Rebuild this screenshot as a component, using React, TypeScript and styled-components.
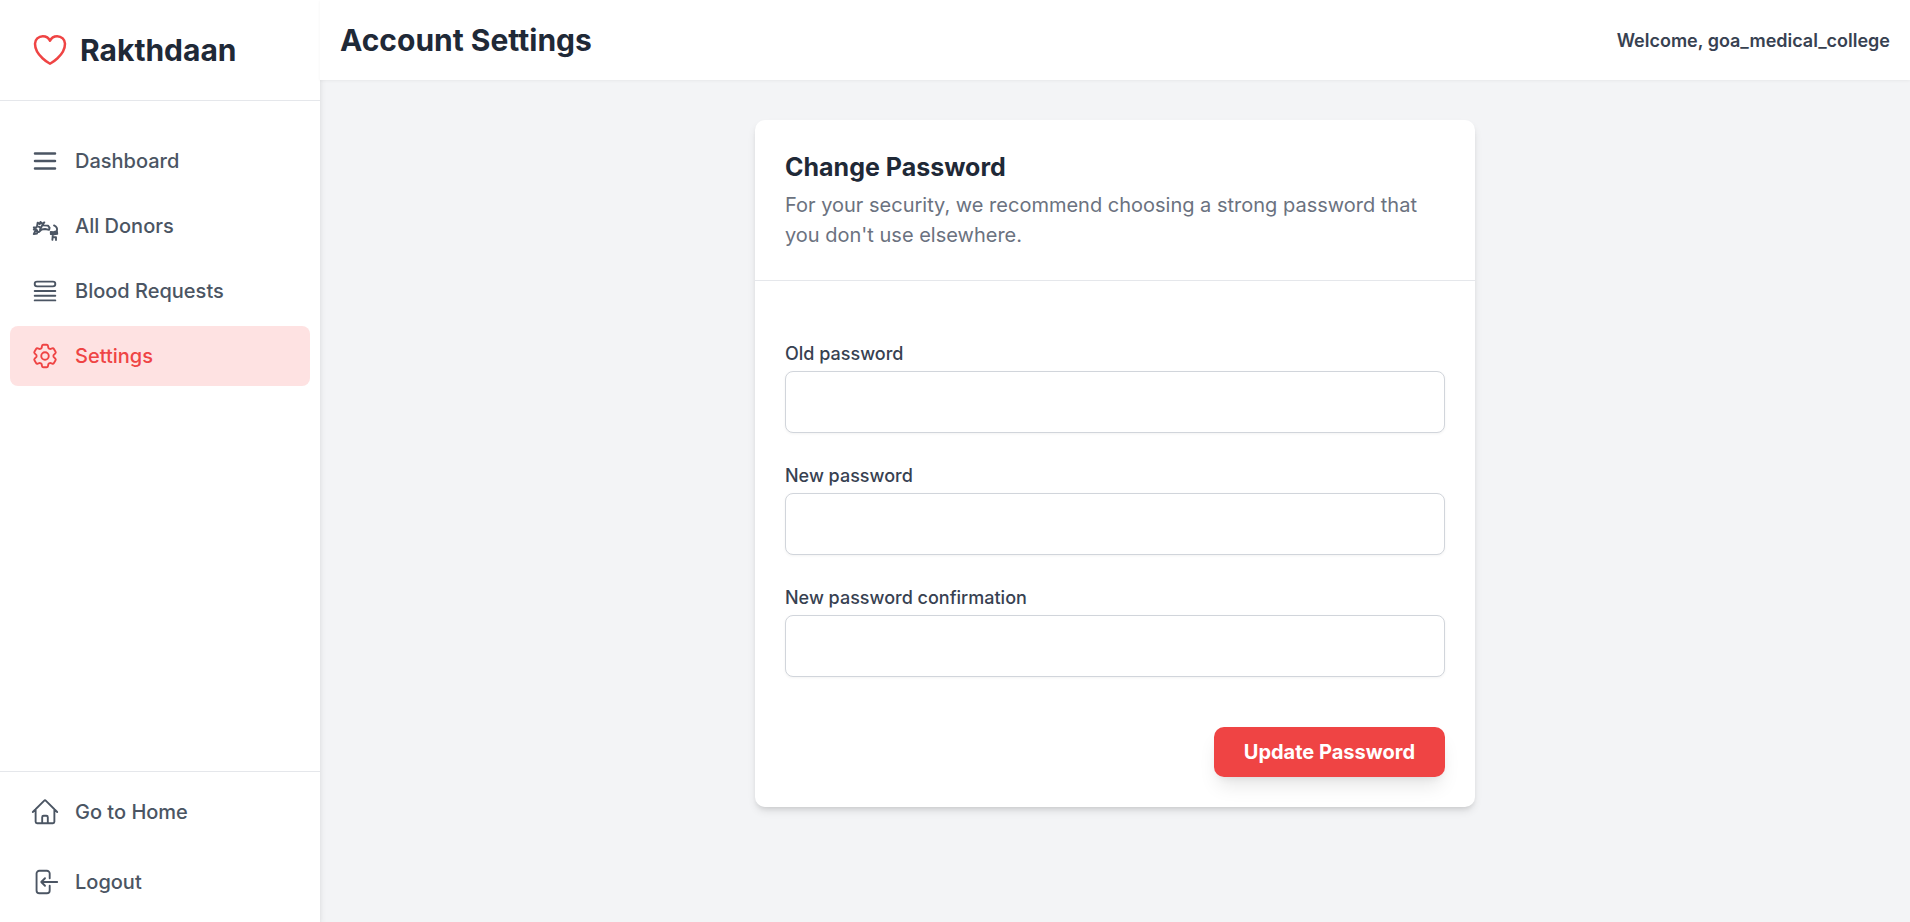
import React, { useState } from 'react';
import styled, { createGlobalStyle, css } from 'styled-components';

const GlobalStyle = createGlobalStyle`
  *, *::before, *::after { box-sizing: border-box; }
  body {
    margin: 0;
    background: #f3f4f6;
    color: #1f2937;
    font-family: Inter, "Liberation Sans", sans-serif;
    font-size: 20px;
    line-height: 30px;
  }
  h1, h2, p { margin: 0; }
`;

const Shell = styled.div`
  display: flex;
  min-height: 100vh;
`;

const Sidebar = styled.aside`
  display: flex;
  flex-direction: column;
  flex: 0 0 320px;
  background: #fff;
  box-shadow: 0 5px 8px -1px rgba(0, 0, 0, 0.1), 0 3px 5px -2px rgba(0, 0, 0, 0.1);
`;

const Brand = styled.div`
  display: flex;
  align-items: center;
  gap: 10px;
  padding: 30px;
  border-bottom: 1px solid #e5e7eb;
  color: #ef4444;
`;

const BrandName = styled.span`
  color: #1f2937;
  font-size: 30px;
  line-height: 40px;
  font-weight: 700;
`;

const Nav = styled.nav`
  display: flex;
  flex-direction: column;
  flex: 1;
  gap: 5px;
  padding: 30px 10px;
`;

const SidebarFooter = styled.div`
  display: flex;
  flex-direction: column;
  gap: 10px;
  padding: 10px;
  border-top: 1px solid #e5e7eb;
`;

const NavLink = styled.a<{ $active?: boolean }>`
  display: flex;
  align-items: center;
  gap: 15px;
  padding: 15px 20px;
  border-radius: 8px;
  color: #4b5563;
  font-weight: 500;
  text-decoration: none;
  ${(p) =>
    p.$active
      ? css`
          background: #fee2e2;
          color: #ef4444;
        `
      : css`
          &:hover {
            background: #f3f4f6;
          }
        `}
`;

const Content = styled.div`
  display: flex;
  flex-direction: column;
  flex: 1;
  min-width: 0;
`;

const TopBar = styled.header`
  position: relative;
  display: flex;
  align-items: center;
  justify-content: space-between;
  padding: 20px;
  background: #fff;
  box-shadow: 0 1px 3px rgba(0, 0, 0, 0.05);
`;

const PageTitle = styled.h1`
  font-size: 30px;
  line-height: 40px;
  font-weight: 700;
`;

const Welcome = styled.span`
  color: #374151;
  font-size: 18px;
  line-height: 25px;
  font-weight: 600;
`;

const Main = styled.main`
  flex: 1;
  padding: 40px;
`;

const Card = styled.section`
  max-width: 720px;
  margin: 0 auto;
  border-radius: 10px;
  background: #fff;
  box-shadow: 0 5px 8px -1px rgba(0, 0, 0, 0.1), 0 3px 5px -2px rgba(0, 0, 0, 0.1);
`;

const CardHeader = styled.div`
  padding: 30px;
  border-bottom: 1px solid #e5e7eb;
`;

const CardTitle = styled.h2`
  margin-bottom: 5px;
  font-size: 25px;
  line-height: 35px;
  font-weight: 700;
`;

const CardText = styled.p`
  color: #6b7280;
`;

const Form = styled.form`
  display: flex;
  flex-direction: column;
  gap: 30px;
  padding: 60px 30px 30px;
`;

const Field = styled.div`
  display: flex;
  flex-direction: column;
  gap: 5px;
`;

const Label = styled.label`
  color: #374151;
  font-size: 18px;
  line-height: 25px;
  font-weight: 500;
`;

const Input = styled.input`
  width: 100%;
  height: 62px;
  padding: 15px 20px;
  border: 1px solid #d1d5db;
  border-radius: 8px;
  background: #fff;
  color: inherit;
  font: inherit;
  box-shadow: 0 1px 3px rgba(0, 0, 0, 0.05);
`;

const Actions = styled.div`
  display: flex;
  justify-content: flex-end;
  padding-top: 20px;
`;

const SubmitButton = styled.button`
  padding: 10px 30px;
  border: 0;
  border-radius: 10px;
  background: #ef4444;
  color: #fff;
  font: inherit;
  font-weight: 700;
  cursor: pointer;
  box-shadow: 0 12px 19px -4px rgba(0, 0, 0, 0.1), 0 5px 8px -5px rgba(0, 0, 0, 0.1);
`;

const Glyph = styled.svg<{ $weight: number }>`
  flex: none;
  overflow: visible;
  fill: none;
  stroke: currentColor;
  stroke-width: ${(p) => p.$weight};
  stroke-linecap: round;
  stroke-linejoin: round;
`;

const icons = {
  heart: [
    'M21 8.25c0-2.485-2.099-4.5-4.688-4.5-1.935 0-3.597 1.126-4.312 2.733-.715-1.607-2.377-2.733-4.313-2.733C5.1 3.75 3 5.765 3 8.25c0 7.22 9 12 9 12s9-4.78 9-12z',
  ],
  bars: ['M4 6h16M4 12h16M4 18h16'],
  donors: [
    'M3 13.2l2.500-.3.600-3.600 1.700 1.200.600-1.800 1.300 1.600 1.800-1.200-1.500 2.400 4.400.200 1.300 1.800-.400 1.600-3.200-.700-2.800.400-2.200 2-1.100-.300-.400 1.500-2.600.500 1-2.200 1.800-.500-.800-1.200-2 .200',
    'M7 12.500l1.500 1 1-1.500-1.500 3M19.200 11.500c2 1 2.800 2.600 2.300 4.200l.300 2.500-2.700.500-2.400-.200-.100-1.800 2.300.200 2.400-.800M17.600 17.300l2.700.300M18.200 19.200l-.300 3.900M20.800 23.200v-2.200h-2.500',
  ],
  queue: [
    'M3.75 12h16.5m-16.5 3.75h16.5M3.75 19.5h16.5M5.625 4.5h12.75a1.875 1.875 0 010 3.75H5.625a1.875 1.875 0 010-3.75z',
  ],
  cog: [
    'M9.594 3.94c.09-.542.56-.94 1.11-.94h2.593c.55 0 1.02.398 1.11.94l.213 1.281c.063.374.313.686.645.87.074.04.147.083.22.127.324.196.72.257 1.075.124l1.217-.456a1.125 1.125 0 011.37.49l1.296 2.247a1.125 1.125 0 01-.26 1.431l-1.003.827c-.293.24-.438.613-.431.992a6.759 6.759 0 010 .255c-.007.378.138.75.43.99l1.005.828c.424.35.534.954.26 1.43l-1.298 2.247a1.125 1.125 0 01-1.369.491l-1.217-.456c-.355-.133-.75-.072-1.076.124a6.57 6.57 0 01-.22.128c-.331.183-.581.495-.644.869l-.213 1.28c-.09.543-.56.941-1.11.941h-2.594c-.55 0-1.02-.398-1.11-.94l-.213-1.281c-.062-.374-.312-.686-.644-.87a6.52 6.52 0 01-.22-.127c-.325-.196-.72-.257-1.076-.124l-1.217.456a1.125 1.125 0 01-1.369-.49l-1.297-2.247a1.125 1.125 0 01.26-1.431l1.004-.827c.292-.24.437-.613.43-.992a6.932 6.932 0 010-.255c.007-.378-.138-.75-.43-.99l-1.004-.828a1.125 1.125 0 01-.26-1.43l1.297-2.247a1.125 1.125 0 011.37-.491l1.216.456c.356.133.751.072 1.076-.124.072-.044.146-.087.22-.128.332-.183.582-.495.644-.869l.214-1.281z',
    'M15 12a3 3 0 11-6 0 3 3 0 016 0z',
  ],
  home: [
    'M2.25 12l8.954-8.955c.44-.439 1.152-.439 1.591 0L21.75 12M4.5 9.75v10.125c0 .621.504 1.125 1.125 1.125H9.75v-4.875c0-.621.504-1.125 1.125-1.125h2.25c.621 0 1.125.504 1.125 1.125V21h4.125c.621 0 1.125-.504 1.125-1.125V9.75M8.25 21h8.25',
  ],
  logout: [
    'M15.75 9V5.25A2.25 2.25 0 0013.5 3h-6a2.25 2.25 0 00-2.25 2.25v13.5A2.25 2.25 0 007.5 21h6a2.25 2.25 0 002.25-2.25V15M12 9l-3 3m0 0l3 3m-3-3h12.75',
  ],
};

type IconName = keyof typeof icons;

const Icon = ({
  name,
  size = 30,
  weight = 1.5,
}: {
  name: IconName;
  size?: number;
  weight?: number;
}) => (
  <Glyph viewBox="0 0 24 24" width={size} height={size} $weight={weight} aria-hidden="true">
    {icons[name].map((d) => (
      <path key={d} d={d} />
    ))}
  </Glyph>
);

const mainLinks: { label: string; icon: IconName; weight?: number; active?: boolean }[] = [
  { label: 'Dashboard', icon: 'bars', weight: 2 },
  { label: 'All Donors', icon: 'donors' },
  { label: 'Blood Requests', icon: 'queue' },
  { label: 'Settings', icon: 'cog', active: true },
];

const footerLinks: { label: string; icon: IconName }[] = [
  { label: 'Go to Home', icon: 'home' },
  { label: 'Logout', icon: 'logout' },
];

const fields = [
  { id: 'old_password', label: 'Old password', autoComplete: 'current-password' },
  { id: 'new_password1', label: 'New password', autoComplete: 'new-password' },
  { id: 'new_password2', label: 'New password confirmation', autoComplete: 'new-password' },
];

export default function App() {
  const [values, setValues] = useState<Record<string, string>>({});

  return (
    <>
      <GlobalStyle />
      <Shell>
        <Sidebar>
          <Brand>
            <Icon name="heart" size={40} />
            <BrandName>Rakthdaan</BrandName>
          </Brand>
          <Nav aria-label="Main">
            {mainLinks.map((link) => (
              <NavLink
                key={link.label}
                href="#"
                $active={link.active}
                aria-current={link.active ? 'page' : undefined}
              >
                <Icon name={link.icon} weight={link.weight} />
                {link.label}
              </NavLink>
            ))}
          </Nav>
          <SidebarFooter>
            {footerLinks.map((link) => (
              <NavLink key={link.label} href="#">
                <Icon name={link.icon} />
                {link.label}
              </NavLink>
            ))}
          </SidebarFooter>
        </Sidebar>
        <Content>
          <TopBar>
            <PageTitle>Account Settings</PageTitle>
            <Welcome>Welcome, goa_medical_college</Welcome>
          </TopBar>
          <Main>
            <Card>
              <CardHeader>
                <CardTitle>Change Password</CardTitle>
                <CardText>
                  For your security, we recommend choosing a strong password that you don't use
                  elsewhere.
                </CardText>
              </CardHeader>
              <Form onSubmit={(e) => e.preventDefault()}>
                {fields.map((field) => (
                  <Field key={field.id}>
                    <Label htmlFor={field.id}>{field.label}</Label>
                    <Input
                      id={field.id}
                      type="password"
                      autoComplete={field.autoComplete}
                      value={values[field.id] ?? ''}
                      onChange={(e) => setValues({ ...values, [field.id]: e.target.value })}
                    />
                  </Field>
                ))}
                <Actions>
                  <SubmitButton type="submit">Update Password</SubmitButton>
                </Actions>
              </Form>
            </Card>
          </Main>
        </Content>
      </Shell>
    </>
  );
}
